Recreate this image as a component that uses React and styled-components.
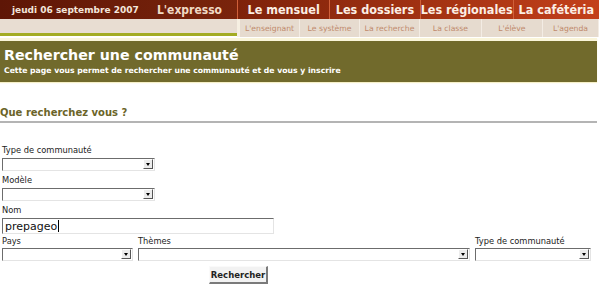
import React from 'react'
import styled, { createGlobalStyle } from 'styled-components'

const Global = createGlobalStyle`
  body {
    margin: 0;
    background: #ffffff;
    font-family: "DejaVu Sans", Verdana, sans-serif;
  }
`;

const Page = styled.div`
  width: 599px;
  height: 295px;
  overflow: hidden;
`;

const Header = styled.div`
  display: flex;
  height: 37px;
`;

const LeftCol = styled.div`
  width: 237px;
  display: flex;
  flex-direction: column;
`;

const DateBar = styled.div`
  height: 19px;
  display: flex;
  align-items: center;
  justify-content: space-between;
  padding: 0 15px 0 12px;
  background: linear-gradient(to right, #5e1606, #7a240c);
`;

const DateText = styled.span`
  font-size: 9px;
  font-weight: bold;
  color: #f3e6dc;
`;

const Brand = styled.span`
  font-family: "DejaVu Sans Condensed", "DejaVu Sans", sans-serif;
  font-size: 12px;
  font-weight: bold;
  color: #f0d9c4;
`;

const LeftSub = styled.div`
  height: 14px;
  background: #e8ddd2;
  border-bottom: 3px solid #a3ab22;
`;

const RightCol = styled.div`
  flex: 1;
  display: flex;
  flex-direction: column;
`;

const MainNav = styled.div`
  height: 19px;
  display: flex;
  background: linear-gradient(to right, #7e220a, #c3401a);
`;

const MainItem = styled.div`
  flex: ${p => p.$w};
  display: flex;
  align-items: center;
  justify-content: center;
  border-left: 1px solid #d0603a;
  font-family: "DejaVu Sans Condensed", "DejaVu Sans", sans-serif;
  font-size: 12.5px;
  font-weight: bold;
  color: #fbeee4;
  white-space: nowrap;
`;

const SubNav = styled.div`
  height: 18px;
  display: flex;
  background: #e6dbcf;
  border-left: 3px solid #f6efe2;
`;

const SubItem = styled.div`
  flex: ${p => p.$w};
  display: flex;
  align-items: center;
  justify-content: center;
  border-right: 1px solid #f3ece4;
  font-size: 7.7px;
  color: #c08a6c;
  white-space: nowrap;
`;

const Banner = styled.div`
  margin: 1px 2px 0 0;
  height: 44px;
  box-sizing: border-box;
  background: #716a2c;
  border-top: 3px solid #faf5da;
  box-shadow: 0 1px 1px #f6f0c8;
  padding: 6px 0 0 4px;
`;

const Title = styled.h1`
  margin: 0;
  font-size: 14.2px;
  line-height: 17px;
  font-weight: bold;
  color: #ffffff;
`;

const Lead = styled.p`
  margin: 2px 0 0;
  font-size: 7.7px;
  font-weight: bold;
  color: #ffffff;
`;

const Section = styled.div`
  padding-top: 24px;
  margin-right: 2px;
`;

const SectionTitle = styled.h2`
  margin: 0;
  padding-bottom: 1px;
  font-size: 10px;
  line-height: 14px;
  font-weight: bold;
  color: #6b6428;
  border-bottom: 2px solid #b4b4b4;
`;

const Form = styled.form`
  padding: 21px 0 0 2px;
  display: flex;
  flex-direction: column;
`;

const Field = styled.div`
  display: flex;
  flex-direction: column;
  width: ${p => p.$w}px;
`;

const Label = styled.label`
  font-size: 8.3px;
  line-height: 12px;
  color: #222;
  margin-bottom: ${p => p.$mb ?? 2}px;
`;

const SelectBox = styled.div`
  position: relative;
  height: 13px;
  box-sizing: border-box;
  border-top: 1px solid #6c6c6c;
  border-left: 1px solid #6c6c6c;
  border-bottom: 1px solid #e4e4e4;
  border-right: 1px solid #e4e4e4;
  background: #fff;
  margin-bottom: ${p => p.$mb ?? 3}px;
`;

const Arrow = styled.span`
  position: absolute;
  right: 1px;
  top: 0;
  width: 10px;
  height: 10px;
  box-sizing: border-box;
  background: #ececec;
  border-top: 1px solid #ffffff;
  border-left: 1px solid #ffffff;
  border-right: 1px solid #555;
  border-bottom: 1px solid #555;
  display: flex;
  align-items: center;
  justify-content: center;

  &::after {
    content: "";
    border-left: 2.5px solid transparent;
    border-right: 2.5px solid transparent;
    border-top: 3px solid #000;
  }
`;

const TextBox = styled.div`
  position: relative;
  height: 16px;
  box-sizing: border-box;
  border-top: 1px solid #6c6c6c;
  border-left: 1px solid #6c6c6c;
  border-bottom: 1px solid #e4e4e4;
  border-right: 1px solid #e4e4e4;
  margin-bottom: 1px;
  display: flex;
  align-items: center;
  padding-left: 2px;
  font-size: 11px;
  color: #111;
`;

const Caret = styled.span`
  width: 1px;
  height: 12px;
  background: #000;
  margin-left: 1px;
`;

const Row = styled.div`
  display: flex;
  gap: 5px;
`;

const Actions = styled.div`
  display: flex;
  padding: 5px 0 0 207px;
`;

const Button = styled.button`
  width: 59px;
  height: 18px;
  padding: 0;
  font-family: "DejaVu Sans", sans-serif;
  font-size: 8.5px;
  font-weight: bold;
  color: #222;
  background: #f2f2f2;
  border-top: 1px solid #fafafa;
  border-left: 1px solid #fafafa;
  border-right: 2px solid #7a7a7a;
  border-bottom: 2px solid #7a7a7a;
`;

const Select = ({ mb }) => (
  <SelectBox $mb={mb}>
    <Arrow />
  </SelectBox>
);

const mainNav = [
  ['Le mensuel', 93],
  ['Les dossiers', 91],
  ['Les régionales', 91],
  ['La cafétéria', 87],
];

const subNav = [
  ["L'enseignant", 60],
  ['Le système', 60],
  ['La recherche', 60],
  ['La classe', 62],
  ["L'élève", 61],
  ["L'agenda", 56],
];

export default function App() {
  return (
    <Page>
      <Global />
      <Header>
        <LeftCol>
          <DateBar>
            <DateText>jeudi 06 septembre 2007</DateText>
            <Brand>L'expresso</Brand>
          </DateBar>
          <LeftSub />
        </LeftCol>
        <RightCol>
          <MainNav>
            {mainNav.map(([t, w]) => (
              <MainItem key={t} $w={w}>{t}</MainItem>
            ))}
          </MainNav>
          <SubNav>
            {subNav.map(([t, w]) => (
              <SubItem key={t} $w={w}>{t}</SubItem>
            ))}
          </SubNav>
        </RightCol>
      </Header>

      <Banner>
        <Title>Rechercher une communauté</Title>
        <Lead>Cette page vous permet de rechercher une communauté et de vous y inscrire</Lead>
      </Banner>

      <Section>
        <SectionTitle>Que recherchez vous ?</SectionTitle>
        <Form>
          <Field $w={153}>
            <Label>Type de communauté</Label>
            <Select />
          </Field>
          <Field $w={153}>
            <Label>Modèle</Label>
            <Select />
          </Field>
          <Field $w={272}>
            <Label>Nom</Label>
            <TextBox>prepageo<Caret /></TextBox>
          </Field>
          <Row>
            <Field $w={131}>
              <Label $mb={1}>Pays</Label>
              <Select mb={0} />
            </Field>
            <Field $w={332}>
              <Label $mb={1}>Thèmes</Label>
              <Select mb={0} />
            </Field>
            <Field $w={116}>
              <Label $mb={1}>Type de communauté</Label>
              <Select mb={0} />
            </Field>
          </Row>
          <Actions>
            <Button type="button">Rechercher</Button>
          </Actions>
        </Form>
      </Section>
    </Page>
  );
}
